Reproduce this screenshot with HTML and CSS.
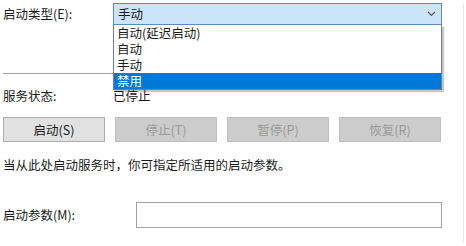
FILE: index.html
```html
<!DOCTYPE html>
<html lang="zh-CN">
<head>
<meta charset="utf-8">
<title>服务属性</title>
<link rel="stylesheet" href="styles.css">
</head>
<body>
<div class="panel">
  <div class="row type-row">
    <span class="label label-type">启动类型(E):</span>
    <div class="combo">
      <span class="combo-value">手动</span>
      <svg class="chev" width="9" height="6" viewBox="0 0 9 6"><path d="M1 1 L4.5 4.5 L8 1" fill="none" stroke="#555" stroke-width="1.1"/></svg>
      <ul class="dropdown">
        <li>自动(延迟启动)</li>
        <li>自动</li>
        <li>手动</li>
        <li class="selected">禁用</li>
      </ul>
    </div>
  </div>
  <div class="sep"></div>
  <div class="row status-row">
    <span class="label label-status">服务状态:</span>
    <span class="status-value">已停止</span>
  </div>
  <div class="buttons">
    <button class="btn">启动(S)</button>
    <button class="btn disabled">停止(T)</button>
    <button class="btn disabled">暂停(P)</button>
    <button class="btn disabled">恢复(R)</button>
  </div>
  <p class="desc">当从此处启动服务时，你可指定所适用的启动参数。</p>
  <div class="row param-row">
    <span class="label label-param">启动参数(M):</span>
    <div class="input"></div>
  </div>
</div>
</body>
</html>
```

FILE: styles.css
```css
html, body {
  margin: 0;
  padding: 0;
  background: #ffffff;
}
body {
  font-family: "Noto Sans CJK SC", "Noto Sans", "Liberation Sans", sans-serif;
  font-size: 12.5px;
  color: #1a1a1a;
}
.panel {
  width: 460px;
  height: 240px;
  padding-left: 3px;
  border-right: 1px solid #e6e6e6;
}
.row {
  display: flex;
  align-items: center;
  line-height: 16px;
}
.type-row {
  margin-top: 3px;
  height: 22px;
}
.label-type { width: 110px; }
.combo {
  position: relative;
  width: 329px;
  height: 22px;
  box-sizing: border-box;
  background: #cce4f7;
  border: 1px solid #5a8cbf;
  display: flex;
  align-items: center;
  justify-content: space-between;
  padding: 0 5px 0 4px;
}
.combo-value { line-height: 16px; }
.chev { display: block; }
.dropdown {
  position: absolute;
  top: calc(100% + 1px);
  left: -1px;
  right: -1px;
  margin: 0;
  padding: 0;
  list-style: none;
  background: #ffffff;
  border: 1px solid #6f7f90;
  border-top: none;
  box-shadow: 2px 2px 1px rgba(0, 0, 0, 0.22);
}
.dropdown li {
  height: 16px;
  line-height: 16px;
  padding-left: 3px;
}
.dropdown li.selected {
  background: #0078d7;
  color: #ffffff;
}
.sep {
  margin-top: 48px;
  height: 1px;
  width: 439px;
  background: #a0a0a0;
}
.status-row { margin-top: 14px; }
.label-status { width: 110px; }
.buttons {
  display: flex;
  gap: 10px;
  margin-top: 13px;
}
.btn {
  width: 102px;
  height: 25px;
  margin: 0;
  padding: 0;
  font: inherit;
  color: #1a1a1a;
  background: #e1e1e1;
  border: 1px solid #adadad;
}
.btn.disabled {
  background: #cccccc;
  border-color: #bfbfbf;
  color: #9a9a9a;
}
.desc {
  margin: 15px 0 0;
  line-height: 16px;
}
.param-row { margin-top: 29px; }
.label-param { width: 133px; }
.input {
  width: 306px;
  height: 26px;
  box-sizing: border-box;
  border: 1px solid #a0a0a0;
  background: #ffffff;
}
```
